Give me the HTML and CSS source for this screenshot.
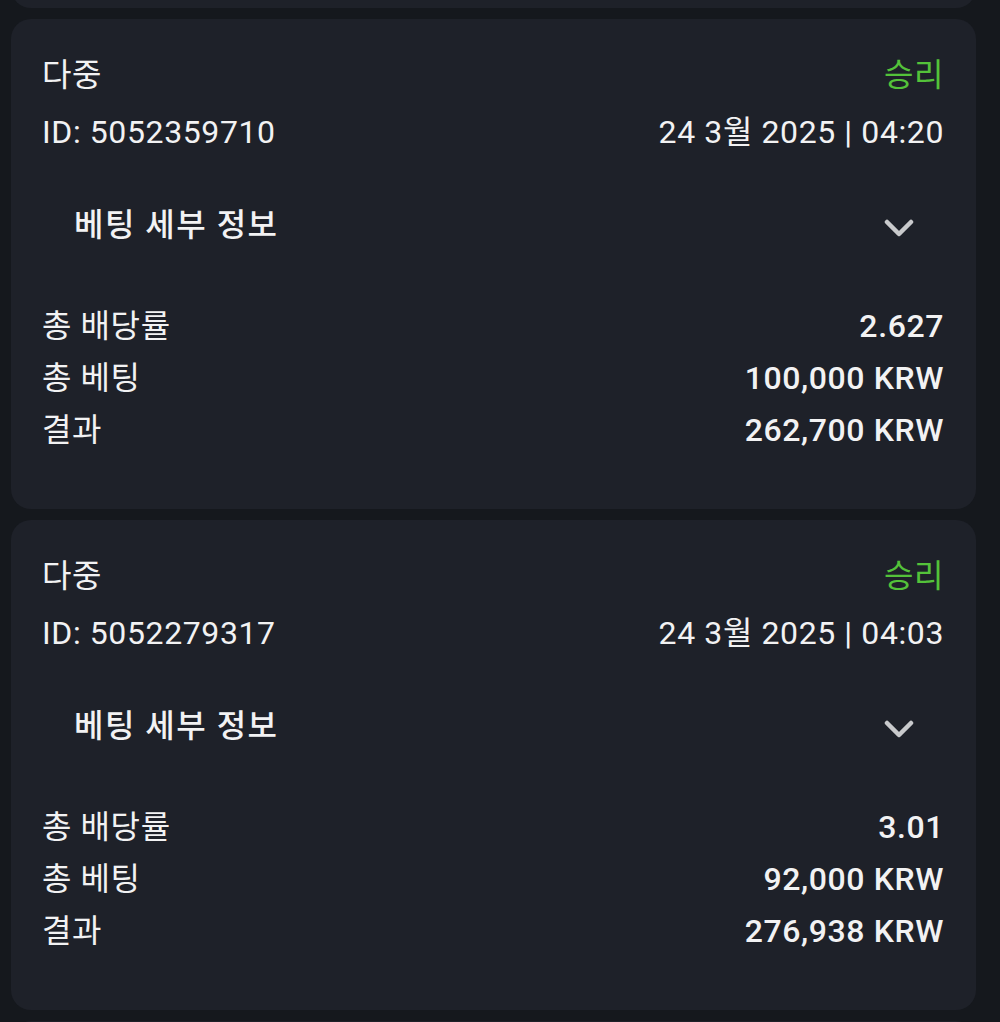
FILE: index.html
```html
<!DOCTYPE html>
<html lang="ko">
<head>
<meta charset="utf-8">
<title>베팅 내역</title>
<link rel="stylesheet" href="styles.css">
</head>
<body>
<div class="feed">
  <div class="peek peek-top"><div class="card card-stub"></div></div>

  <section class="card">
    <div class="head">
      <span class="type">다중</span>
      <span class="status">승리</span>
    </div>
    <div class="meta">
      <span>ID: 5052359710</span>
      <span>24 3월 2025 | 04:20</span>
    </div>
    <div class="details">
      <span class="details-title">베팅 세부 정보</span>
      <svg class="chev" viewBox="0 0 30 20" width="30" height="20"><path d="M3 4 L15 16 L27 4" fill="none" stroke="#c9cacc" stroke-width="4.5" stroke-linecap="round" stroke-linejoin="round"/></svg>
    </div>
    <div class="rows">
      <div class="row"><span>총 배당률</span><span class="val">2.627</span></div>
      <div class="row"><span>총 베팅</span><span class="val">100,000 KRW</span></div>
      <div class="row"><span>결과</span><span class="val">262,700 KRW</span></div>
    </div>
  </section>

  <section class="card">
    <div class="head">
      <span class="type">다중</span>
      <span class="status">승리</span>
    </div>
    <div class="meta">
      <span>ID: 5052279317</span>
      <span>24 3월 2025 | 04:03</span>
    </div>
    <div class="details">
      <span class="details-title">베팅 세부 정보</span>
      <svg class="chev" viewBox="0 0 30 20" width="30" height="20"><path d="M3 4 L15 16 L27 4" fill="none" stroke="#c9cacc" stroke-width="4.5" stroke-linecap="round" stroke-linejoin="round"/></svg>
    </div>
    <div class="rows">
      <div class="row"><span>총 배당률</span><span class="val">3.01</span></div>
      <div class="row"><span>총 베팅</span><span class="val">92,000 KRW</span></div>
      <div class="row"><span>결과</span><span class="val">276,938 KRW</span></div>
    </div>
  </section>

  <div class="peek peek-bottom"><div class="card card-stub"></div></div>
</div>
</body>
</html>
```

FILE: styles.css
```css
html, body {
  margin: 0;
  padding: 0;
  background: #15181d;
}

body {
  font-family: Roboto, "Noto Sans CJK KR", "Noto Sans", sans-serif;
  color: #f2f2f3;
  font-size: 32px;
  letter-spacing: 0.6px;
}

.feed {
  display: flex;
  flex-direction: column;
  gap: 11px;
  padding: 0 24px 0 11px;
}

.peek {
  overflow: hidden;
  display: flex;
  flex-direction: column;
  flex-shrink: 0;
}

.peek-top {
  height: 8px;
  justify-content: flex-end;
}

.peek-bottom {
  height: 3px;
  justify-content: flex-start;
}

.card {
  background: #1e2129;
  border-radius: 20px;
  padding: 36px 32px 53px 31px;
  box-sizing: border-box;
  height: 490px;
  display: flex;
  flex-direction: column;
  flex-shrink: 0;
}

.card-stub {
  height: 40px;
  padding: 0;
}

.head,
.meta {
  display: flex;
  justify-content: space-between;
  align-items: center;
  line-height: 40px;
  height: 40px;
}

.meta {
  margin-top: 17px;
}

.status {
  color: #54c23a;
}

.details {
  margin-top: 44px;
  height: 64px;
  display: flex;
  align-items: center;
  justify-content: space-between;
  padding: 0 30px 0 32px;
}

.details-title {
  font-weight: 500;
  letter-spacing: 1.5px;
  line-height: 40px;
  margin-bottom: 6px;
}

.chev {
  display: block;
}

.rows {
  margin-top: 40px;
  display: flex;
  flex-direction: column;
}

.row {
  display: flex;
  justify-content: space-between;
  align-items: center;
  height: 52px;
  line-height: 52px;
}

.val {
  font-weight: 500;
}
```
